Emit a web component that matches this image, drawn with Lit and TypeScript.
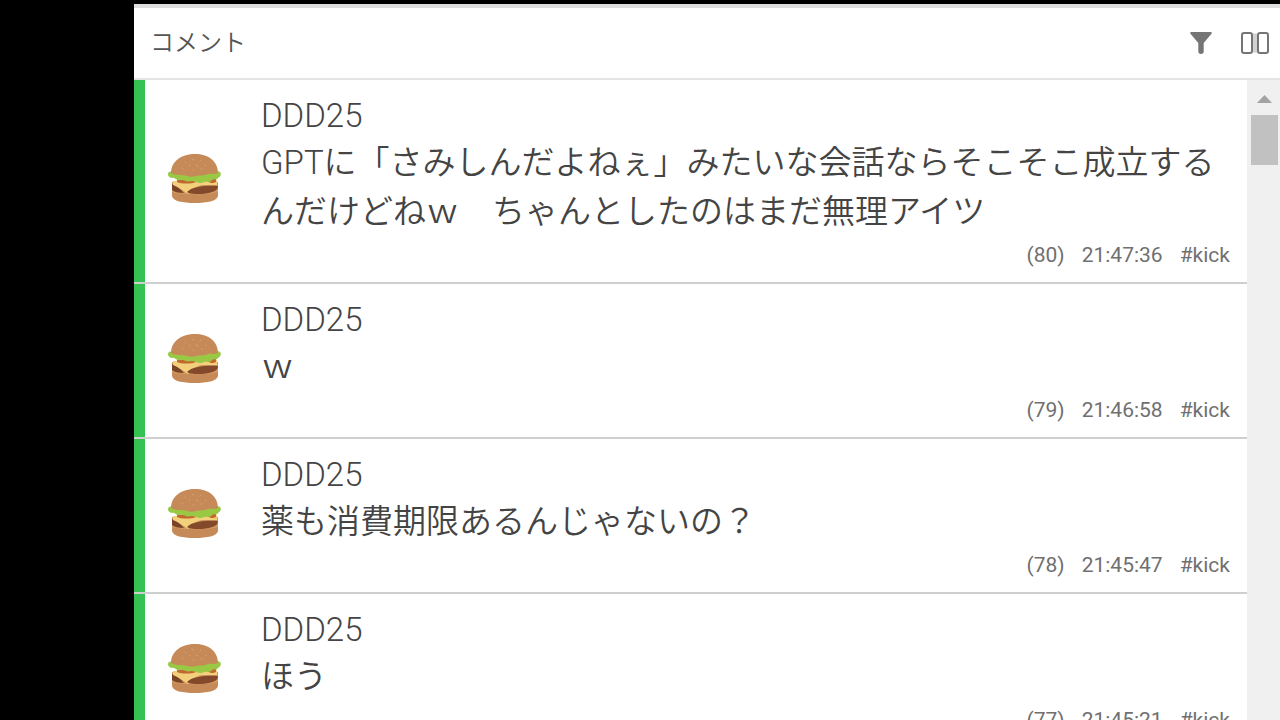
import { LitElement, html, css, svg } from "lit";
import { customElement, property } from "lit/decorators.js";

interface Comment {
  no: number;
  name: string;
  text: string;
  time: string;
  tag: string;
}

const comments: Comment[] = [
  {
    no: 80,
    name: "DDD25",
    text: "GPTに「さみしんだよねぇ」みたいな会話ならそこそこ成立するんだけどねｗ　ちゃんとしたのはまだ無理アイツ",
    time: "21:47:36",
    tag: "#kick",
  },
  { no: 79, name: "DDD25", text: "ｗ", time: "21:46:58", tag: "#kick" },
  { no: 78, name: "DDD25", text: "薬も消費期限あるんじゃないの？", time: "21:45:47", tag: "#kick" },
  { no: 77, name: "DDD25", text: "ほう", time: "21:45:21", tag: "#kick" },
];

const burger = svg`
  <path d="M4 34 C10 37 43 37 50 34 L50 42 C49 47 39 49 27 49 C14 49 5 47 4 42 Z" fill="#c68a58"/>
  <path d="M4 28 C12 26 42 26 50 28 L50 38 C42 41 12 41 4 38 Z" fill="#d39a62"/>
  <path d="M4 30 C8 31 12 34 16 39 C10 39 6 38 4 36 Z" fill="#7a4526"/>
  <path d="M5 27 L49 26 L49 31 L34 31 C28 32 24 35 20 40 C16 37 10 33 5 31 Z" fill="#f2d07c"/>
  <path d="M19 38 C24 32 40 31 50 32 C50 37 44 39 34 40 C27 40 22 40 19 38 Z" fill="#84492a"/>
  <path d="M9 26 C14 25 24 26 28 28 C24 30 13 30 9 28 Z M39 27 L48 24 L48 28 C45 30 42 29 39 27 Z" fill="#c2692f"/>
  <path d="M1 18 C3 17 50 16 52 18 C54 20 52 23 50 24 C48 27 46 24 44 26 C42 29 39 27 36 28 C32 31 28 27 23 27 C18 29 16 25 12 26 C8 27 7 23 4 24 C0 23 -1 20 1 18 Z" fill="#98c844"/>
  <path d="M3 19 C3 7 14 0 27 0 C40 0 50 7 50 19 C46 21 43 19 40 20 C36 22 32 21 28 22 C22 24 18 21 13 21 C9 21 7 21 3 19 Z" fill="#c68a58"/>
  <g stroke="#d6a177" stroke-width="1" stroke-linecap="round">
    <path d="M17 8l1 1M24 5l2 1M33 6l-1 1M21 12l1-1M28 11l2 1M38 11l-1 1M14 14l1 1M33 15l1 0M25 16l1 0"/>
  </g>`;

@customElement("comment-row")
class CommentRow extends LitElement {
  @property({ attribute: false }) comment!: Comment;

  static styles = css`
    :host {
      display: block;
    }
    .row {
      display: flex;
      border-bottom: 2px solid #cfcfcf;
      background: #fff;
    }
    .stripe {
      flex: none;
      width: 11px;
      background: #34c353;
    }
    .avatar {
      flex: none;
      width: 53px;
      height: 50px;
      margin: 0 40px 4px 23px;
      align-self: center;
    }
    .body {
      flex: 1;
      min-width: 0;
      padding: 13px 17px 8px 0;
    }
    .name,
    .text {
      margin: 0;
      font-size: 33px;
      font-weight: 350;
      color: #444;
    }
    .name {
      line-height: 45px;
    }
    .text {
      line-height: 49px;
      word-break: break-all;
    }
    .meta {
      display: flex;
      justify-content: flex-end;
      gap: 17px;
      font-size: 21px;
      line-height: 38px;
      color: #707070;
    }
  `;

  render() {
    const c = this.comment;
    return html`<article class="row">
      <span class="stripe"></span>
      <svg class="avatar" viewBox="0 0 53 50" aria-hidden="true">${burger}</svg>
      <div class="body">
        <h2 class="name">${c.name}</h2>
        <p class="text">${c.text}</p>
        <div class="meta"><span>(${c.no})</span><time>${c.time}</time><span>${c.tag}</span></div>
      </div>
    </article>`;
  }
}

@customElement("app-root")
class AppRoot extends LitElement {
  static styles = css`
    :host {
      display: block;
      font-family: Roboto, "Noto Sans CJK JP", sans-serif;
    }
    .screen {
      box-sizing: border-box;
      height: 100vh;
      padding: 4px 0 0 134px;
      background: #000;
      display: flex;
      flex-direction: column;
      overflow: hidden;
    }
    .header {
      flex: none;
      display: flex;
      align-items: center;
      padding: 0 9px 0 16px;
      border-top: 4px solid #dedede;
      border-bottom: 2px solid #e4e4e4;
      background: #fff;
    }
    .title {
      flex: 1;
      margin: 0;
      font-size: 24px;
      line-height: 70px;
      font-weight: 350;
      color: #555;
    }
    .tool {
      display: flex;
      padding: 0;
      border: 0;
      background: none;
      color: #757575;
      margin-left: 22px;
    }
    .icon {
      width: 32px;
      height: 32px;
    }
    .main {
      flex: 1;
      min-height: 0;
      display: flex;
      background: #fff;
    }
    .list {
      flex: 1;
      min-width: 0;
      margin: 0;
      padding: 0;
      list-style: none;
      overflow: hidden;
    }
    .track {
      box-sizing: border-box;
      flex: none;
      width: 33px;
      padding-left: 2px;
      background: #f0f0f0;
      display: flex;
      flex-direction: column;
      align-items: center;
    }
    .arrow {
      width: 15px;
      height: 8px;
      margin: 15px 0 12px;
      fill: #a3a3a3;
    }
    .thumb {
      width: 27px;
      height: 50px;
      background: #c1c1c1;
    }
  `;

  render() {
    return html`<div class="screen">
      <header class="header">
        <h1 class="title">コメント</h1>
        <button class="tool" type="button" aria-label="フィルター">
          <svg class="icon" viewBox="0 0 32 32" fill="currentColor">
            <path d="M6.200 5h19.600c1 0 1.300 1 .7 1.800L18.700 16V24.500c0 1.600-1 2.500-2.700 2.500s-2.700-.9-2.700-2.500V16L5.500 6.800C4.900 6 5.200 5 6.200 5z"/>
          </svg>
        </button>
        <button class="tool" type="button" aria-label="列表示">
          <svg class="icon" viewBox="0 0 32 32" fill="none" stroke="currentColor" stroke-width="2">
            <path d="M13.500 6.500h5v19h-5z" fill="#d2d2d2" stroke="none"/>
            <rect x="3" y="6" width="10" height="20" rx="2" fill="#fff"/>
            <rect x="19" y="6" width="10" height="20" rx="2" fill="#fff"/>
          </svg>
        </button>
      </header>
      <main class="main">
        <ul class="list">
          ${comments.map((c) => html`<li><comment-row .comment=${c}></comment-row></li>`)}
        </ul>
        <div class="track" aria-hidden="true">
          <svg class="arrow" viewBox="0 0 15 8"><path d="M7.500 0L15 8H0z"/></svg>
          <div class="thumb"></div>
        </div>
      </main>
    </div>`;
  }
}
